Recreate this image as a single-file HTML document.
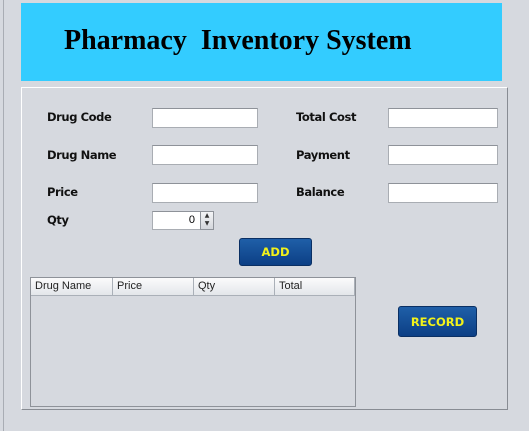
<!DOCTYPE html>
<html><head><style>
body{margin:0;width:529px;height:431px;background:#d6d9df;position:relative;overflow:hidden;font-family:"DejaVu Sans","Liberation Sans",sans-serif}
.a{position:absolute}
.lbl{position:absolute;font-size:11.5px;font-weight:bold;color:#111;font-family:"DejaVu Sans",sans-serif;letter-spacing:-0.4px}
.in{position:absolute;background:#fff;border:1px solid #a9adb3;border-top-color:#8e9299;box-sizing:border-box;height:20px}
.btn{position:absolute;background:linear-gradient(#1f5fa8,#0c3f85);border:1px solid #0a2f63;border-radius:3px;color:#f2f21a;font-weight:bold;font-size:11.5px;display:flex;align-items:center;justify-content:center;box-sizing:border-box;font-family:"DejaVu Sans",sans-serif}
.th{position:absolute;top:0;height:17px;font-family:"Liberation Sans",sans-serif;font-size:11px;color:#222;line-height:17px;padding-left:4px;box-sizing:border-box;border-right:1px solid #aab0b8}
</style></head><body>
<div class="a" style="left:3px;top:0;width:1px;height:431px;background:#a9adb4"></div>
<div class="a" style="left:21px;top:3px;width:481px;height:78px;background:#33ccff"></div>
<div class="a" style="left:64px;top:25px;font-family:'Liberation Serif',serif;font-weight:bold;font-size:28px;color:#000;white-space:pre">Pharmacy  Inventory System</div>
<div class="a" style="left:21px;top:87px;width:487px;height:323px;border:1px solid #888c93;border-top-color:#fff;border-left-color:#fff;box-sizing:border-box"></div>
<div class="lbl" style="left:47px;top:110px">Drug Code</div>
<div class="lbl" style="left:47px;top:148px">Drug Name</div>
<div class="lbl" style="left:47px;top:185px">Price</div>
<div class="lbl" style="left:47px;top:213px">Qty</div>
<div class="lbl" style="left:296px;top:110px">Total Cost</div>
<div class="lbl" style="left:296px;top:148px">Payment</div>
<div class="lbl" style="left:296px;top:185px">Balance</div>
<div class="in" style="left:152px;top:108px;width:106px"></div>
<div class="in" style="left:152px;top:145px;width:106px"></div>
<div class="in" style="left:152px;top:183px;width:106px"></div>
<div class="in" style="left:388px;top:108px;width:110px"></div>
<div class="in" style="left:388px;top:145px;width:110px"></div>
<div class="in" style="left:388px;top:183px;width:110px"></div>
<div class="in" style="left:152px;top:211px;width:49px;height:19px;font-family:'Liberation Sans',sans-serif;font-size:11px;text-align:right;padding-right:5px;line-height:17px">0</div>
<div class="a" style="left:200px;top:211px;width:14px;height:19px;border:1px solid #8e9299;box-sizing:border-box;background:linear-gradient(#f4f5f7,#d3d6db);font-size:6px;text-align:center;line-height:8px;color:#333">▲<br>▼</div>
<div class="btn" style="left:239px;top:238px;width:73px;height:28px">ADD</div>
<div class="btn" style="left:398px;top:306px;width:79px;height:31px">RECORD</div>
<div class="a" style="left:30px;top:277px;width:326px;height:130px;border:1px solid #8e9299;box-sizing:border-box;background:#d6d9df">
<div class="a" style="left:0;top:0;width:324px;height:17px;background:linear-gradient(#fbfbfc,#e3e6ea);border-bottom:1px solid #aab0b8">
<div class="th" style="left:0;width:82px">Drug Name</div>
<div class="th" style="left:82px;width:81px">Price</div>
<div class="th" style="left:163px;width:81px">Qty</div>
<div class="th" style="left:244px;width:80px">Total</div>
</div></div>
</body></html>
